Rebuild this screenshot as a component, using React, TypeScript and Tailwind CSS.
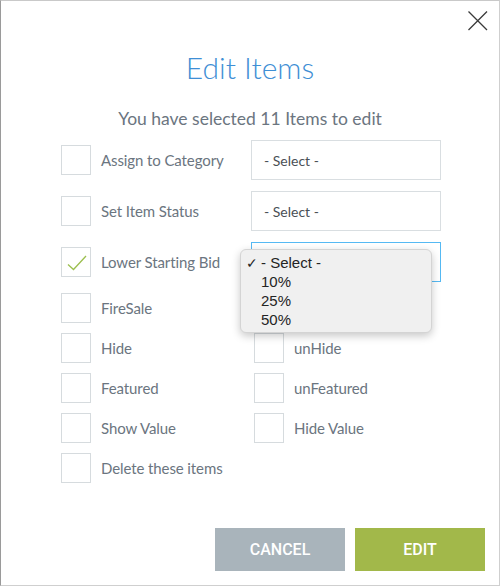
import React from 'react';

const Box = ({ checked = false }: { checked?: boolean }) => (
  <span className="relative block w-[30px] h-[30px] shrink-0 border border-[#d6dbde] bg-white">
    {checked && (
      <svg className="absolute inset-0" width="30" height="30" viewBox="0 0 30 30" fill="none">
        <path d="M6 16.5 L11.5 21.5 L24 8" stroke="#9cbf4f" strokeWidth="1.3" />
      </svg>
    )}
  </span>
);

const Check = ({ label, checked = false }: { label: string; checked?: boolean }) => (
  <label className="flex items-center gap-[10px] h-[30px]">
    <Box checked={checked} />
    <span className="text-[15px] text-[#6b7580] tracking-[-0.1px]">{label}</span>
  </label>
);

const SelectBox = ({ focused = false, children }: { focused?: boolean; children?: React.ReactNode }) => (
  <div
    className={`relative w-[190px] h-[40px] flex items-center pl-[12px] bg-white border ${
      focused ? 'border-[#55b9f3]' : 'border-[#d9dee1]'
    }`}
  >
    {!focused && <span className="text-[14px] text-[#4a4f55]">- Select -</span>}
    {children}
  </div>
);

export default function App() {
  return (
    <div className="w-[500px] h-[586px] bg-white border-t border-t-[#c9c9c9] border-l border-l-[#9a9a9a] border-r border-r-[#cfcfcf] border-b border-b-[#cfcfcf] relative font-['Lato','Open_Sans',sans-serif]">
      {/* close */}
      <button className="absolute right-[10px] top-[9px] w-[22px] h-[22px]">
        <svg width="22" height="22" viewBox="0 0 22 22" fill="none">
          <path d="M1.5 1.5 L20 20 M20 1.5 L1.5 20" stroke="#3a3a3a" strokeWidth="1.3" />
        </svg>
      </button>

      <h1 className="pt-[47px] text-center text-[30px] leading-[38px] font-light text-[#3f8fd5]">Edit Items</h1>
      <p className="mt-[22px] text-center text-[17.5px] leading-[22px] text-[#6b7580]">You have selected 11 Items to edit</p>

      <div className="mt-[10px] pl-[60px] flex flex-col">
        <div className="flex flex-col gap-[11px]">
          <div className="flex items-center">
            <div className="w-[190px]"><Check label="Assign to Category" /></div>
            <SelectBox />
          </div>
          <div className="flex items-center">
            <div className="w-[190px]"><Check label="Set Item Status" /></div>
            <SelectBox />
          </div>
          <div className="flex items-center">
            <div className="w-[190px]"><Check label="Lower Starting Bid" checked /></div>
            <SelectBox focused>
              {/* open dropdown */}
              <div className="absolute left-[-12px] top-[6px] z-10 w-[192px] h-[84px] rounded-[6px] bg-[#f0f0f0] border border-[#d4d4d4] shadow-[0_3px_8px_rgba(0,0,0,0.22)] font-['Liberation_Sans','Helvetica',sans-serif] text-[15px] text-[#242424] pt-[4px]">
                <div className="flex h-[19px] items-center">
                  <span className="w-[20px] pl-[5px] text-[14px]">✓</span>
                  <span>- Select -</span>
                </div>
                <div className="flex h-[19px] items-center pl-[20px]">10%</div>
                <div className="flex h-[19px] items-center pl-[20px]">25%</div>
                <div className="flex h-[19px] items-center pl-[20px]">50%</div>
              </div>
            </SelectBox>
          </div>
        </div>

        <div className="mt-[11px] flex flex-col gap-[10px]">
          <div className="flex">
            <div className="w-[193px]"><Check label="FireSale" /></div>
            <Check label="unFireSale" />
          </div>
          <div className="flex">
            <div className="w-[193px]"><Check label="Hide" /></div>
            <Check label="unHide" />
          </div>
          <div className="flex">
            <div className="w-[193px]"><Check label="Featured" /></div>
            <Check label="unFeatured" />
          </div>
          <div className="flex">
            <div className="w-[193px]"><Check label="Show Value" /></div>
            <Check label="Hide Value" />
          </div>
          <div className="flex">
            <Check label="Delete these items" />
          </div>
        </div>
      </div>

      <div className="mt-[45px] pr-[14px] flex justify-end gap-[10px] font-['Roboto','Liberation_Sans',sans-serif]">
        <button className="w-[130px] h-[43px] bg-[#a9b4bb] text-white text-[16px] font-medium">CANCEL</button>
        <button className="w-[130px] h-[43px] bg-[#a2b84a] text-white text-[16px] font-medium">EDIT</button>
      </div>
    </div>
  );
}
